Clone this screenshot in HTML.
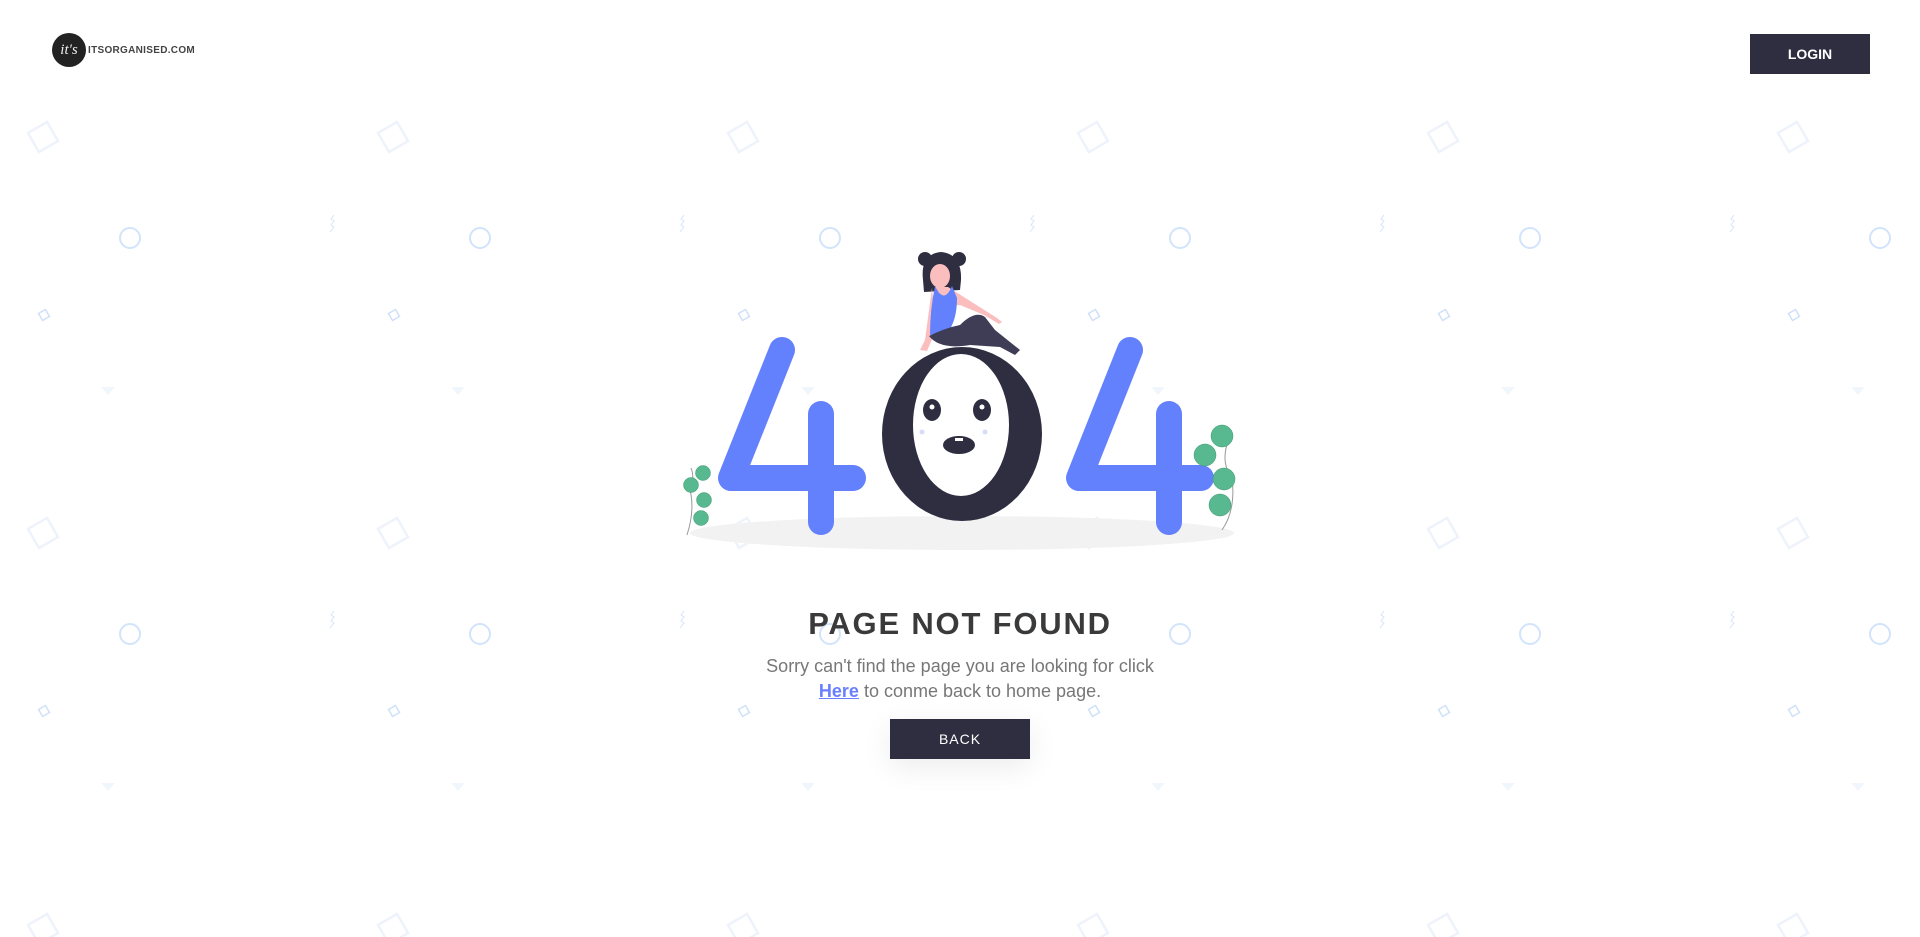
<!DOCTYPE html>
<html><head><meta charset="utf-8"><style>
html,body{margin:0;padding:0;width:1920px;height:937px;overflow:hidden;background:#fff;font-family:"Liberation Sans",sans-serif}
.bg{position:absolute;left:0;top:0}
.logo{position:absolute;left:52px;top:33px;display:flex;align-items:center}
.logo .c{width:34px;height:34px;border-radius:50%;background:#222;color:#eee;font-family:"Liberation Serif",serif;font-style:italic;font-size:15px;display:flex;align-items:center;justify-content:center}
.logo span{font-size:10px;font-weight:bold;color:#444;margin-left:2px;letter-spacing:.3px}
.login{position:absolute;left:1750px;top:34px;width:120px;height:40px;background:#2f2e41;color:#fff;font-weight:bold;font-size:14px;display:flex;align-items:center;justify-content:center}
h1{position:absolute;left:0;width:1920px;top:606px;margin:0;text-align:center;font-size:31px;font-weight:bold;color:#3a3a3a;letter-spacing:1.8px}
p{position:absolute;left:0;width:1920px;top:654px;margin:0;text-align:center;font-size:18px;line-height:25px;color:#777}
p a{color:#6a7fff;font-weight:bold;text-decoration:underline}
.back{position:absolute;left:890px;top:719px;width:140px;height:40px;background:#2f2e41;color:#fff;font-size:14px;letter-spacing:1px;display:flex;align-items:center;justify-content:center;box-shadow:0 8px 30px rgba(0,0,0,.08)}
</style></head><body>
<svg class="bg" width="1920" height="937">
<defs><pattern id="p" x="0" y="0" width="350" height="396" patternUnits="userSpaceOnUse">
<rect x="32" y="126" width="22" height="22" fill="none" stroke="#eef2fb" stroke-width="2.5" transform="rotate(-30 43 137)"/>
<circle cx="130" cy="238" r="10" fill="none" stroke="#d2e4fb" stroke-width="2"/>
<path d="M334 215 l-3 4 3 2 -3 4 3 2 -4 5" fill="none" stroke="#d6e5f9" stroke-width="1"/>
<rect x="40" y="311" width="8" height="8" fill="none" stroke="#cfe0f8" stroke-width="1.5" transform="rotate(-30 44 315)"/>
<path d="M101 387 h14 l-7 8z" fill="#f1f6fd"/>
</pattern></defs>
<rect width="1920" height="937" fill="url(#p)"/>
</svg>
<div class="logo"><div class="c">it's</div><span>ITSORGANISED.COM</span></div>
<div class="login">LOGIN</div>
<svg class="bg" width="1920" height="937">
<ellipse cx="962" cy="533" rx="272" ry="17" fill="#f2f2f2"/>
<g fill="none" stroke="#6380fd" stroke-width="26" stroke-linecap="round" stroke-linejoin="round">
<path d="M782 350 L731 478 H853 M821 414 V522"/>
<path d="M1130 350 L1079 478 H1201 M1169 414 V522"/>
</g>
<path fill-rule="evenodd" fill="#2f2e41" d="M882 434 a80 87 0 1 0 160 0 a80 87 0 1 0 -160 0z M913 425 a48 71 0 1 0 96 0 a48 71 0 1 0 -96 0z"/>
<ellipse cx="932" cy="410" rx="9" ry="11" fill="#2f2e41"/><circle cx="932" cy="407" r="2.5" fill="#fff"/>
<ellipse cx="982" cy="410" rx="9" ry="11" fill="#2f2e41"/><circle cx="982" cy="407" r="2.5" fill="#fff"/>
<circle cx="922" cy="432" r="2.5" fill="#d7dcfa"/><circle cx="985" cy="432" r="2.5" fill="#d7dcfa"/>
<ellipse cx="959" cy="445" rx="16" ry="9" fill="#2f2e41"/><rect x="955" y="438" width="8" height="3" fill="#fff"/>
<!-- girl -->
<circle cx="925" cy="259" r="7" fill="#2f2e41"/><circle cx="959" cy="259" r="7" fill="#2f2e41"/>
<path d="M923 280 Q920 254 941 252 Q962 254 961 280 L960 290 L924 292z" fill="#2f2e41"/>
<ellipse cx="940" cy="276" rx="10" ry="12" fill="#fbbebe"/>
<path d="M935 287 L948 287 L997 318 L1002 322 L999 324 L984 315 L960 305 L948 306z" fill="#fbbebe"/>
<path d="M932 288 L925 340 L920 350 L927 351 L936 330z" fill="#fbbebe"/>
<path d="M935 286 Q944 305 952 286 L957 298 Q957 320 948 332 L930 335 Q930 310 935 286z" fill="#6380fd"/>
<path d="M929 336 Q940 350 970 345 L1000 347 L1015 355 L1020 350 L995 330 L985 317 Q975 310 960 325 Q945 328 929 336z" fill="#3f3d56"/>
<!-- plants -->
<g stroke="#999" stroke-width="1" fill="none"><path d="M687 535 Q695 510 690 490 Q695 478 691 468"/><path d="M1222 530 Q1236 510 1232 478 Q1218 460 1232 432"/></g>
<g fill="#58b88f" stroke="#3f9770" stroke-width=".5">
<circle cx="703" cy="473" r="7.5"/><circle cx="691" cy="485" r="7.5"/><circle cx="704" cy="500" r="7.5"/><circle cx="701" cy="518" r="7.5"/>
<circle cx="1222" cy="436" r="11"/><circle cx="1205" cy="455" r="11"/><circle cx="1224" cy="479" r="11"/><circle cx="1220" cy="505" r="11"/>
</g>
</svg>
<h1>PAGE NOT FOUND</h1>
<p>Sorry can't find the page you are looking for click<br><a>Here</a> to conme back to home page.</p>
<div class="back">BACK</div>
</body></html>
